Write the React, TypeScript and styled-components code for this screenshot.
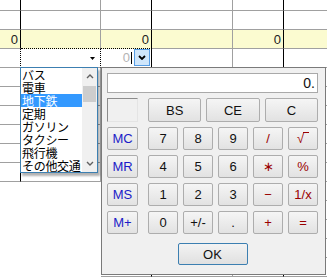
import React from "react";
import styled, { createGlobalStyle } from "styled-components";

const GRID = "#a0a0a0";
const UI = `"Liberation Sans", Arial, sans-serif`;
const JP = `"Noto Sans CJK JP", "Noto Sans", sans-serif`;

const GlobalStyle = createGlobalStyle`
  html, body { margin: 0; padding: 0; background: #fff; }
  body { width: 327px; height: 277px; overflow: hidden; font-family: ${UI}; }
`;

const Stage = styled.div`
  position: relative;
  width: 327px;
  height: 277px;
  overflow: hidden;
`;

const Sheet = styled.div`
  display: grid;
  grid-template-columns: 21px 80px 51px 81px 51px 44px;
  grid-template-rows: 11px repeat(14, 19px);
`;

type CellProps = {
  $edge?: string;
  $edgeStyle?: string;
  $baseStyle?: string;
  $fill?: boolean;
  $blank?: boolean;
};

const Cell = styled.div<CellProps>`
  box-sizing: border-box;
  display: flex;
  align-items: center;
  justify-content: flex-end;
  padding-right: 2px;
  background: ${(p) => (p.$fill ? "#fbfbd0" : "#fff")};
  border-right: 1px ${(p) => p.$edgeStyle ?? "solid"}
    ${(p) => (p.$blank ? "transparent" : p.$edgeStyle === "dotted" ? "#000" : p.$edge ?? GRID)};
  border-bottom: 1px ${(p) => p.$baseStyle ?? "solid"}
    ${(p) => (p.$blank ? "transparent" : p.$baseStyle === "dotted" ? "#000" : GRID)};
  font-size: 13px;
  color: #222;
`;

const Editor = styled(Cell)`
  align-items: flex-start;
  padding-right: 1px;
`;

const Ghost = styled.span`
  color: #b4b4b4;
  font-size: 13px;
  line-height: 17px;
`;

const Caret = styled.span`
  width: 1px;
  height: 12px;
  margin: 3px 2px 0 1px;
  background: #000;
`;

const DropButton = styled.div`
  box-sizing: border-box;
  width: 16px;
  height: 17px;
  border: 1px solid #569de5;
  background: #cfe6fb;
  display: flex;
  align-items: center;
  justify-content: center;
`;

const DropMark = styled.svg`
  margin-right: 3px;
`;

const ListBox = styled.div`
  position: absolute;
  left: 20px;
  top: 67px;
  width: 78px;
  height: 106px;
  box-sizing: border-box;
  display: flex;
  border: 1px solid #3c7fb1;
  background: #fff;
  box-shadow: 2px 3px 2px rgba(0, 0, 0, 0.3);
`;

const Items = styled.div`
  flex: 1;
  min-width: 0;
  display: flex;
  flex-direction: column;
`;

const Item = styled.div<{ $on?: boolean }>`
  height: 13px;
  line-height: 13px;
  padding-left: 1px;
  font-family: ${JP};
  font-size: 12px;
  letter-spacing: -0.3px;
  white-space: nowrap;
  color: ${(p) => (p.$on ? "#fff" : "#000")};
  background: ${(p) => (p.$on ? "#3399ff" : "transparent")};
`;

const ScrollBar = styled.div`
  width: 15px;
  display: flex;
  flex-direction: column;
  background: #f0f0f0;
`;

const ScrollArrow = styled.div`
  height: 17px;
  display: flex;
  align-items: center;
  justify-content: center;
`;

const Thumb = styled.div`
  height: 16px;
  margin: 1px 1px 0 1px;
  background: #cdcdcd;
`;

const Spacer = styled.div`
  flex: 1;
`;

const Calc = styled.div`
  position: absolute;
  left: 101px;
  top: 67px;
  width: 225px;
  height: 208px;
  box-sizing: border-box;
  padding: 5px 7px 0 5px;
  border: 1px solid #7a7a7a;
  background: #f0f0f0;
  display: flex;
  flex-direction: column;
`;

const Display = styled.div`
  box-sizing: border-box;
  height: 20px;
  margin-bottom: 5px;
  padding-right: 2px;
  border: 1px solid #a9a9a9;
  background: #fff;
  text-align: right;
  font-size: 14px;
  line-height: 18px;
  color: #111;
`;

const Keypad = styled.div`
  display: flex;
  gap: 10px;
`;

const MemColumn = styled.div`
  width: 31px;
  display: flex;
  flex-direction: column;
  gap: 5px;
`;

const Indicator = styled.div`
  box-sizing: border-box;
  height: 24px;
  border: 1px solid;
  border-color: #8c8c8c #e4e4e4 #e4e4e4 #8c8c8c;
  background: #f0f0f0;
`;

const MainColumn = styled.div`
  display: flex;
  flex-direction: column;
  gap: 5px;
`;

const WideRow = styled.div`
  display: grid;
  grid-template-columns: repeat(3, 1fr);
  column-gap: 5px;
  height: 24px;
`;

const NumGrid = styled.div`
  display: grid;
  grid-template-columns: repeat(5, 30px);
  grid-auto-rows: 23px;
  gap: 5px;
`;

type Tone = "num" | "mem" | "op";
const toneColor: Record<Tone, string> = { num: "#111", mem: "#1c1cc8", op: "#9a0000" };

const Key = styled.button<{ $tone: Tone }>`
  box-sizing: border-box;
  height: 23px;
  margin: 0;
  padding: 0;
  border: 1px solid #adadad;
  border-radius: 2px;
  background: linear-gradient(#f5f5f5, #e2e2e2);
  font-family: ${UI};
  font-size: 13px;
  color: ${(p) => toneColor[p.$tone]};
  display: flex;
  align-items: center;
  justify-content: center;
`;

const WideKey = styled(Key)`
  height: 24px;
`;

const OkKey = styled(Key)`
  width: 70px;
  height: 22px;
  margin: 9px auto 0;
  border-color: #3c7fb1;
  background: linear-gradient(#f3f3f3, #e0e0e0);
`;

const Radical = styled.span`
  display: inline-flex;
  align-items: flex-start;
`;

const Vinculum = styled.span`
  width: 6px;
  margin: 1px 0 0 -1px;
  border-top: 1px solid currentColor;
`;

const TRANSPORT = ["バス", "電車", "地下鉄", "定期", "ガソリン", "タクシー", "飛行機", "その他交通"];
const MEM = ["MC", "MR", "MS", "M+"];
const WIDE = ["BS", "CE", "C"];
const PAD = [
  ["7", "8", "9", "/", "√"],
  ["4", "5", "6", "∗", "%"],
  ["1", "2", "3", "−", "1/x"],
  ["0", "+/-", ".", "+", "="],
];
const EDGES = ["#000", GRID, "#000", GRID, "#000", "transparent"];

const Chevron: React.FC<{ up?: boolean; color?: string; width?: number }> = ({ up, color = "#606060", width = 1.4 }) => (
  <svg width="8" height="5" viewBox="0 0 8 5">
    <polyline
      points={up ? "1,4 4,1 7,4" : "1,1 4,4 7,1"}
      fill="none"
      stroke={color}
      strokeWidth={width}
    />
  </svg>
);

const renderCell = (r: number, c: number) => {
  const key = `${r}-${c}`;
  const edge = EDGES[c];
  if (r === 2) {
    return (
      <Cell key={key} $edge={edge} $fill $baseStyle={c === 1 || c === 2 ? "dotted" : undefined}>
        {c % 2 === 0 ? "0" : null}
      </Cell>
    );
  }
  if (r === 3 && c === 1) {
    return (
      <Cell key={key} $edge={edge} $edgeStyle="dotted">
        <DropMark width="5" height="3" viewBox="0 0 5 3">
          <polygon points="0,0 5,0 2.5,3" fill="#000" />
        </DropMark>
      </Cell>
    );
  }
  if (r === 3 && c === 0) return <Cell key={key} $edge={edge} $edgeStyle="dotted" />;
  if (r === 3 && c === 2) {
    return (
      <Editor key={key} $edge={edge}>
        <Ghost>0</Ghost>
        <Caret />
        <DropButton>
          <Chevron color="#000" width={1.8} />
        </DropButton>
      </Editor>
    );
  }
  return <Cell key={key} $edge={edge} $blank={r >= 10 && c <= 1} />;
};

const App: React.FC = () => {
  return (
    <Stage>
      <GlobalStyle />
      <Sheet>
        {Array.from({ length: 15 }).map((_, r) => EDGES.map((__, c) => renderCell(r, c)))}
      </Sheet>

      <ListBox>
        <Items>
          {TRANSPORT.map((t, i) => (
            <Item key={t} $on={i === 2}>
              {t}
            </Item>
          ))}
        </Items>
        <ScrollBar>
          <ScrollArrow>
            <Chevron up />
          </ScrollArrow>
          <Thumb />
          <Spacer />
          <ScrollArrow>
            <Chevron />
          </ScrollArrow>
        </ScrollBar>
      </ListBox>

      <Calc>
        <Display>0.</Display>
        <Keypad>
          <MemColumn>
            <Indicator />
            {MEM.map((m) => (
              <Key key={m} $tone="mem">
                {m}
              </Key>
            ))}
          </MemColumn>
          <MainColumn>
            <WideRow>
              {WIDE.map((w) => (
                <WideKey key={w} $tone="num">
                  {w}
                </WideKey>
              ))}
            </WideRow>
            <NumGrid>
              {PAD.flat().map((k, i) => (
                <Key key={k} $tone={i % 5 < 3 ? "num" : "op"}>
                  {k === "√" ? (
                    <Radical>
                      √<Vinculum />
                    </Radical>
                  ) : (
                    k
                  )}
                </Key>
              ))}
            </NumGrid>
          </MainColumn>
        </Keypad>
        <OkKey $tone="num">OK</OkKey>
      </Calc>
    </Stage>
  );
};

export default App;
